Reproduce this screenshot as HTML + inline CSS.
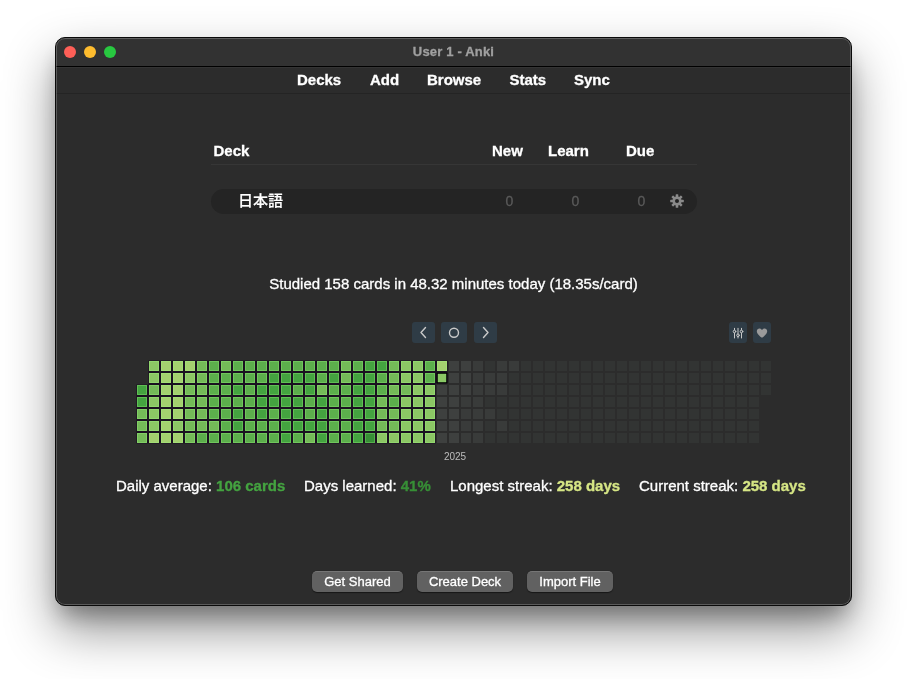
<!DOCTYPE html>
<html lang="en">
<head>
<meta charset="utf-8">
<title>User 1 - Anki</title>
<style>
html,body{margin:0;padding:0;}
body{width:907px;height:679px;background:#fff;position:relative;overflow:hidden;font-family:"Liberation Sans","Noto Sans CJK JP",sans-serif;color:#fff;}
#root{position:absolute;left:0;top:0;width:907px;height:679px;will-change:transform;-webkit-text-stroke:0.3px;}
#win{position:absolute;left:55px;top:37px;width:795px;height:567px;border:1px solid #0a0a0a;border-radius:10px;background:#2c2c2c;
 box-shadow:0 24px 50px rgba(0,0,0,.43), 0 14px 22px -6px rgba(0,0,0,.3);overflow:hidden;}
#win:after{content:"";position:absolute;left:0;top:0;right:0;bottom:0;border-radius:9px;box-shadow:inset 0 0 0 1px rgba(255,255,255,.22);pointer-events:none;}
#titlebar{position:absolute;left:0;top:0;width:795px;height:28px;background:#323232;border-bottom:1px solid #000;box-shadow:0 1px 0 #343434;}
.tl{position:absolute;top:8px;width:12px;height:12px;border-radius:50%;}
#title{position:absolute;left:0;right:0;top:6px;text-align:center;font-weight:bold;font-size:13px;line-height:16px;color:#a0a0a0;letter-spacing:0.18px;}
#toolbar{position:absolute;left:0;top:29px;width:795px;height:26px;border-bottom:1px solid #242424;}
#toolbar span{position:absolute;top:4px;font-weight:bold;font-size:15px;line-height:18px;color:#fff;}
.abs{position:absolute;white-space:nowrap;}
.hd{font-weight:bold;font-size:15px;line-height:18px;color:#fff;}
.btn{position:absolute;top:534px;height:20px;border-radius:5px;background:#616161;border-top:1px solid #767676;color:#fff;font-size:13px;line-height:20px;text-align:center;box-shadow:0 0.5px 1px rgba(0,0,0,.5);}
.hb{position:absolute;top:284px;height:21px;border-radius:3px;background:#2f3c46;}
svg{position:absolute;left:0;top:0;}
.k{fill:#1a1120;}
rect.l3{fill:#a4d06f;stroke:#a3de75;}rect.l4{fill:#8cc665;stroke:#92d76e;}rect.l5{fill:#74ba58;stroke:#81cf65;}rect.l6{fill:#5cae4c;stroke:#70c65c;}rect.l7{fill:#44a340;stroke:#60bf54;}rect.l8{fill:#378f36;stroke:#56b14d;}
rect.eA{fill:#3e403f;}rect.eB{fill:#393b3a;}rect.eC{fill:#323433;}
rect.t{stroke:#000;stroke-width:1.6;}
</style>
</head>
<body>
<div id="root">
<div id="win">
 <div id="titlebar">
  <div class="tl" style="left:8px;background:#fe5f57;"></div>
  <div class="tl" style="left:28px;background:#febc2e;"></div>
  <div class="tl" style="left:48px;background:#28c840;"></div>
  <div id="title">User 1 - Anki</div>
 </div>
 <div id="toolbar">
  <span style="left:241px">Decks</span>
  <span style="left:314px">Add</span>
  <span style="left:371px">Browse</span>
  <span style="left:453.4px">Stats</span>
  <span style="left:518px">Sync</span>
 </div>
</div>
<div class="abs hd" style="left:213.5px;top:142px;">Deck</div>
<div class="abs hd" style="left:492px;top:142px;">New</div>
<div class="abs hd" style="left:548px;top:142px;">Learn</div>
<div class="abs hd" style="left:626px;top:142px;">Due</div>
<div class="abs" style="left:211px;top:164px;width:486px;height:1px;background:#363636;"></div>
<div class="abs" style="left:211px;top:188.5px;width:486px;height:25px;border-radius:12.5px;background:#242424;"></div>
<div class="abs" style="left:238px;top:190.8px;font-size:15px;line-height:20px;color:#fff;font-weight:500;-webkit-text-stroke:0.2px;">日本語</div>
<div class="abs" style="left:505.5px;top:192px;font-size:14px;line-height:18px;color:#5a5a5a;">0</div>
<div class="abs" style="left:571.5px;top:192px;font-size:14px;line-height:18px;color:#5a5a5a;">0</div>
<div class="abs" style="left:637.5px;top:192px;font-size:14px;line-height:18px;color:#5a5a5a;">0</div>
<svg class="abs" style="left:670px;top:194px;" width="14" height="14" viewBox="0 0 14 14"><g fill="#8a8a8a"><circle cx="7" cy="7" r="4.6"/><g id="t"><rect x="5.7" y="0.2" width="2.6" height="13.6" rx="0.6"/></g><rect x="5.7" y="0.2" width="2.6" height="13.6" rx="0.6" transform="rotate(45 7 7)"/><rect x="5.7" y="0.2" width="2.6" height="13.6" rx="0.6" transform="rotate(90 7 7)"/><rect x="5.7" y="0.2" width="2.6" height="13.6" rx="0.6" transform="rotate(135 7 7)"/></g><circle cx="7" cy="7" r="2" fill="#222"/></svg>
<div class="abs" style="left:0;width:907px;top:275px;text-align:center;font-size:15px;line-height:18px;color:#fff;">Studied 158 cards in 48.32 minutes today (18.35s/card)</div>

<div class="hb" style="left:412px;top:322px;width:23px;"></div>
<div class="hb" style="left:441px;top:322px;width:26px;"></div>
<div class="hb" style="left:474px;top:322px;width:23px;"></div>
<div class="hb" style="left:729px;top:322px;width:18px;"></div>
<div class="hb" style="left:753px;top:322px;width:18px;"></div>
<svg width="907" height="679" viewBox="0 0 907 679">
<g fill="none" stroke="#c9c9c9" stroke-width="1.4" stroke-linecap="round" stroke-linejoin="round">
<path d="M425.5 327.5 L421 332.5 L425.5 337.5"/>
<circle cx="454" cy="332.8" r="4.5"/>
<path d="M483.5 327.5 L488 332.5 L483.5 337.5"/>
</g>
<g fill="none" stroke="#c9c9c9" stroke-width="1" stroke-linecap="round">
<path d="M734.5 328.3V338M738 328.3V338M741.5 328.3V338"/>
<circle cx="734.5" cy="331.5" r="1.3" fill="#2f3c46"/>
<circle cx="738" cy="335.3" r="1.3" fill="#2f3c46"/>
<circle cx="741.5" cy="331.5" r="1.3" fill="#2f3c46"/>
</g>
<path fill="#9a9a9a" transform="translate(762 333) scale(.94) translate(-762 -332.4)" d="M762 337.5 C757 334 756.5 331.5 756.5 330.2 C756.5 328.6 757.8 327.5 759.2 327.5 C760.4 327.5 761.4 328.2 762 329.2 C762.6 328.2 763.6 327.5 764.8 327.5 C766.2 327.5 767.5 328.6 767.5 330.2 C767.5 331.5 767 334 762 337.5Z"/>
<path class="k" d="M136.4 384.4 L148.4 384.4 L148.4 360.4 L447.6 360.4 L447.6 383.6 L435.6 383.6 L435.6 443.6 L136.4 443.6Z"/>
<rect class="l7" x="137.5" y="385.5" width="9" height="9"/>
<rect class="l7" x="137.5" y="397.5" width="9" height="9"/>
<rect class="l5" x="137.5" y="409.5" width="9" height="9"/>
<rect class="l5" x="137.5" y="421.5" width="9" height="9"/>
<rect class="l5" x="137.5" y="433.5" width="9" height="9"/>
<rect class="l4" x="149.5" y="361.5" width="9" height="9"/>
<rect class="l4" x="149.5" y="373.5" width="9" height="9"/>
<rect class="l5" x="149.5" y="385.5" width="9" height="9"/>
<rect class="l4" x="149.5" y="397.5" width="9" height="9"/>
<rect class="l4" x="149.5" y="409.5" width="9" height="9"/>
<rect class="l4" x="149.5" y="421.5" width="9" height="9"/>
<rect class="l3" x="149.5" y="433.5" width="9" height="9"/>
<rect class="l3" x="161.5" y="361.5" width="9" height="9"/>
<rect class="l3" x="161.5" y="373.5" width="9" height="9"/>
<rect class="l3" x="161.5" y="385.5" width="9" height="9"/>
<rect class="l3" x="161.5" y="397.5" width="9" height="9"/>
<rect class="l3" x="161.5" y="409.5" width="9" height="9"/>
<rect class="l3" x="161.5" y="421.5" width="9" height="9"/>
<rect class="l3" x="161.5" y="433.5" width="9" height="9"/>
<rect class="l3" x="173.5" y="361.5" width="9" height="9"/>
<rect class="l3" x="173.5" y="373.5" width="9" height="9"/>
<rect class="l3" x="173.5" y="385.5" width="9" height="9"/>
<rect class="l3" x="173.5" y="397.5" width="9" height="9"/>
<rect class="l3" x="173.5" y="409.5" width="9" height="9"/>
<rect class="l4" x="173.5" y="421.5" width="9" height="9"/>
<rect class="l3" x="173.5" y="433.5" width="9" height="9"/>
<rect class="l3" x="185.5" y="361.5" width="9" height="9"/>
<rect class="l4" x="185.5" y="373.5" width="9" height="9"/>
<rect class="l5" x="185.5" y="385.5" width="9" height="9"/>
<rect class="l5" x="185.5" y="397.5" width="9" height="9"/>
<rect class="l5" x="185.5" y="409.5" width="9" height="9"/>
<rect class="l5" x="185.5" y="421.5" width="9" height="9"/>
<rect class="l5" x="185.5" y="433.5" width="9" height="9"/>
<rect class="l5" x="197.5" y="361.5" width="9" height="9"/>
<rect class="l5" x="197.5" y="373.5" width="9" height="9"/>
<rect class="l5" x="197.5" y="385.5" width="9" height="9"/>
<rect class="l5" x="197.5" y="397.5" width="9" height="9"/>
<rect class="l5" x="197.5" y="409.5" width="9" height="9"/>
<rect class="l5" x="197.5" y="421.5" width="9" height="9"/>
<rect class="l6" x="197.5" y="433.5" width="9" height="9"/>
<rect class="l6" x="209.5" y="361.5" width="9" height="9"/>
<rect class="l6" x="209.5" y="373.5" width="9" height="9"/>
<rect class="l6" x="209.5" y="385.5" width="9" height="9"/>
<rect class="l6" x="209.5" y="397.5" width="9" height="9"/>
<rect class="l6" x="209.5" y="409.5" width="9" height="9"/>
<rect class="l5" x="209.5" y="421.5" width="9" height="9"/>
<rect class="l6" x="209.5" y="433.5" width="9" height="9"/>
<rect class="l5" x="221.5" y="361.5" width="9" height="9"/>
<rect class="l6" x="221.5" y="373.5" width="9" height="9"/>
<rect class="l6" x="221.5" y="385.5" width="9" height="9"/>
<rect class="l6" x="221.5" y="397.5" width="9" height="9"/>
<rect class="l6" x="221.5" y="409.5" width="9" height="9"/>
<rect class="l6" x="221.5" y="421.5" width="9" height="9"/>
<rect class="l6" x="221.5" y="433.5" width="9" height="9"/>
<rect class="l6" x="233.5" y="361.5" width="9" height="9"/>
<rect class="l6" x="233.5" y="373.5" width="9" height="9"/>
<rect class="l7" x="233.5" y="385.5" width="9" height="9"/>
<rect class="l6" x="233.5" y="397.5" width="9" height="9"/>
<rect class="l7" x="233.5" y="409.5" width="9" height="9"/>
<rect class="l7" x="233.5" y="421.5" width="9" height="9"/>
<rect class="l6" x="233.5" y="433.5" width="9" height="9"/>
<rect class="l6" x="245.5" y="361.5" width="9" height="9"/>
<rect class="l6" x="245.5" y="373.5" width="9" height="9"/>
<rect class="l6" x="245.5" y="385.5" width="9" height="9"/>
<rect class="l6" x="245.5" y="397.5" width="9" height="9"/>
<rect class="l6" x="245.5" y="409.5" width="9" height="9"/>
<rect class="l6" x="245.5" y="421.5" width="9" height="9"/>
<rect class="l6" x="245.5" y="433.5" width="9" height="9"/>
<rect class="l6" x="257.5" y="361.5" width="9" height="9"/>
<rect class="l6" x="257.5" y="373.5" width="9" height="9"/>
<rect class="l7" x="257.5" y="385.5" width="9" height="9"/>
<rect class="l7" x="257.5" y="397.5" width="9" height="9"/>
<rect class="l7" x="257.5" y="409.5" width="9" height="9"/>
<rect class="l6" x="257.5" y="421.5" width="9" height="9"/>
<rect class="l6" x="257.5" y="433.5" width="9" height="9"/>
<rect class="l6" x="269.5" y="361.5" width="9" height="9"/>
<rect class="l7" x="269.5" y="373.5" width="9" height="9"/>
<rect class="l7" x="269.5" y="385.5" width="9" height="9"/>
<rect class="l7" x="269.5" y="397.5" width="9" height="9"/>
<rect class="l6" x="269.5" y="409.5" width="9" height="9"/>
<rect class="l6" x="269.5" y="421.5" width="9" height="9"/>
<rect class="l6" x="269.5" y="433.5" width="9" height="9"/>
<rect class="l6" x="281.5" y="361.5" width="9" height="9"/>
<rect class="l7" x="281.5" y="373.5" width="9" height="9"/>
<rect class="l7" x="281.5" y="385.5" width="9" height="9"/>
<rect class="l7" x="281.5" y="397.5" width="9" height="9"/>
<rect class="l7" x="281.5" y="409.5" width="9" height="9"/>
<rect class="l7" x="281.5" y="421.5" width="9" height="9"/>
<rect class="l7" x="281.5" y="433.5" width="9" height="9"/>
<rect class="l6" x="293.5" y="361.5" width="9" height="9"/>
<rect class="l7" x="293.5" y="373.5" width="9" height="9"/>
<rect class="l6" x="293.5" y="385.5" width="9" height="9"/>
<rect class="l7" x="293.5" y="397.5" width="9" height="9"/>
<rect class="l7" x="293.5" y="409.5" width="9" height="9"/>
<rect class="l7" x="293.5" y="421.5" width="9" height="9"/>
<rect class="l6" x="293.5" y="433.5" width="9" height="9"/>
<rect class="l6" x="305.5" y="361.5" width="9" height="9"/>
<rect class="l7" x="305.5" y="373.5" width="9" height="9"/>
<rect class="l7" x="305.5" y="385.5" width="9" height="9"/>
<rect class="l6" x="305.5" y="397.5" width="9" height="9"/>
<rect class="l6" x="305.5" y="409.5" width="9" height="9"/>
<rect class="l7" x="305.5" y="421.5" width="9" height="9"/>
<rect class="l5" x="305.5" y="433.5" width="9" height="9"/>
<rect class="l6" x="317.5" y="361.5" width="9" height="9"/>
<rect class="l6" x="317.5" y="373.5" width="9" height="9"/>
<rect class="l5" x="317.5" y="385.5" width="9" height="9"/>
<rect class="l7" x="317.5" y="397.5" width="9" height="9"/>
<rect class="l7" x="317.5" y="409.5" width="9" height="9"/>
<rect class="l7" x="317.5" y="421.5" width="9" height="9"/>
<rect class="l7" x="317.5" y="433.5" width="9" height="9"/>
<rect class="l6" x="329.5" y="361.5" width="9" height="9"/>
<rect class="l7" x="329.5" y="373.5" width="9" height="9"/>
<rect class="l6" x="329.5" y="385.5" width="9" height="9"/>
<rect class="l6" x="329.5" y="397.5" width="9" height="9"/>
<rect class="l6" x="329.5" y="409.5" width="9" height="9"/>
<rect class="l6" x="329.5" y="421.5" width="9" height="9"/>
<rect class="l6" x="329.5" y="433.5" width="9" height="9"/>
<rect class="l5" x="341.5" y="361.5" width="9" height="9"/>
<rect class="l5" x="341.5" y="373.5" width="9" height="9"/>
<rect class="l6" x="341.5" y="385.5" width="9" height="9"/>
<rect class="l6" x="341.5" y="397.5" width="9" height="9"/>
<rect class="l6" x="341.5" y="409.5" width="9" height="9"/>
<rect class="l6" x="341.5" y="421.5" width="9" height="9"/>
<rect class="l6" x="341.5" y="433.5" width="9" height="9"/>
<rect class="l6" x="353.5" y="361.5" width="9" height="9"/>
<rect class="l7" x="353.5" y="373.5" width="9" height="9"/>
<rect class="l7" x="353.5" y="385.5" width="9" height="9"/>
<rect class="l7" x="353.5" y="397.5" width="9" height="9"/>
<rect class="l7" x="353.5" y="409.5" width="9" height="9"/>
<rect class="l7" x="353.5" y="421.5" width="9" height="9"/>
<rect class="l7" x="353.5" y="433.5" width="9" height="9"/>
<rect class="l7" x="365.5" y="361.5" width="9" height="9"/>
<rect class="l7" x="365.5" y="373.5" width="9" height="9"/>
<rect class="l7" x="365.5" y="385.5" width="9" height="9"/>
<rect class="l7" x="365.5" y="397.5" width="9" height="9"/>
<rect class="l7" x="365.5" y="409.5" width="9" height="9"/>
<rect class="l7" x="365.5" y="421.5" width="9" height="9"/>
<rect class="l8" x="365.5" y="433.5" width="9" height="9"/>
<rect class="l7" x="377.5" y="361.5" width="9" height="9"/>
<rect class="l6" x="377.5" y="373.5" width="9" height="9"/>
<rect class="l6" x="377.5" y="385.5" width="9" height="9"/>
<rect class="l5" x="377.5" y="397.5" width="9" height="9"/>
<rect class="l5" x="377.5" y="409.5" width="9" height="9"/>
<rect class="l5" x="377.5" y="421.5" width="9" height="9"/>
<rect class="l4" x="377.5" y="433.5" width="9" height="9"/>
<rect class="l5" x="389.5" y="361.5" width="9" height="9"/>
<rect class="l5" x="389.5" y="373.5" width="9" height="9"/>
<rect class="l5" x="389.5" y="385.5" width="9" height="9"/>
<rect class="l6" x="389.5" y="397.5" width="9" height="9"/>
<rect class="l5" x="389.5" y="409.5" width="9" height="9"/>
<rect class="l5" x="389.5" y="421.5" width="9" height="9"/>
<rect class="l4" x="389.5" y="433.5" width="9" height="9"/>
<rect class="l4" x="401.5" y="361.5" width="9" height="9"/>
<rect class="l4" x="401.5" y="373.5" width="9" height="9"/>
<rect class="l5" x="401.5" y="385.5" width="9" height="9"/>
<rect class="l4" x="401.5" y="397.5" width="9" height="9"/>
<rect class="l4" x="401.5" y="409.5" width="9" height="9"/>
<rect class="l4" x="401.5" y="421.5" width="9" height="9"/>
<rect class="l4" x="401.5" y="433.5" width="9" height="9"/>
<rect class="l4" x="413.5" y="361.5" width="9" height="9"/>
<rect class="l4" x="413.5" y="373.5" width="9" height="9"/>
<rect class="l4" x="413.5" y="385.5" width="9" height="9"/>
<rect class="l4" x="413.5" y="397.5" width="9" height="9"/>
<rect class="l4" x="413.5" y="409.5" width="9" height="9"/>
<rect class="l4" x="413.5" y="421.5" width="9" height="9"/>
<rect class="l4" x="413.5" y="433.5" width="9" height="9"/>
<rect class="l6" x="425.5" y="361.5" width="9" height="9"/>
<rect class="l6" x="425.5" y="373.5" width="9" height="9"/>
<rect class="l4" x="425.5" y="385.5" width="9" height="9"/>
<rect class="l4" x="425.5" y="397.5" width="9" height="9"/>
<rect class="l4" x="425.5" y="409.5" width="9" height="9"/>
<rect class="l4" x="425.5" y="421.5" width="9" height="9"/>
<rect class="l4" x="425.5" y="433.5" width="9" height="9"/>
<rect class="l3" x="437.5" y="361.5" width="9" height="9"/>
<rect x="436.7" y="372.7" width="10.6" height="10.6" fill="#000"/><rect class="l4" x="438.3" y="374.3" width="7.4" height="7.4"/>
<rect class="eA" x="437" y="385" width="10" height="10"/>
<rect class="eA" x="437" y="397" width="10" height="10"/>
<rect class="eA" x="437" y="409" width="10" height="10"/>
<rect class="eA" x="437" y="421" width="10" height="10"/>
<rect class="eA" x="437" y="433" width="10" height="10"/>
<rect class="eA" x="449" y="361" width="10" height="10"/>
<rect class="eA" x="449" y="373" width="10" height="10"/>
<rect class="eA" x="449" y="385" width="10" height="10"/>
<rect class="eA" x="449" y="397" width="10" height="10"/>
<rect class="eA" x="449" y="409" width="10" height="10"/>
<rect class="eA" x="449" y="421" width="10" height="10"/>
<rect class="eA" x="449" y="433" width="10" height="10"/>
<rect class="eA" x="461" y="361" width="10" height="10"/>
<rect class="eA" x="461" y="373" width="10" height="10"/>
<rect class="eA" x="461" y="385" width="10" height="10"/>
<rect class="eB" x="461" y="397" width="10" height="10"/>
<rect class="eB" x="461" y="409" width="10" height="10"/>
<rect class="eB" x="461" y="421" width="10" height="10"/>
<rect class="eB" x="461" y="433" width="10" height="10"/>
<rect class="eB" x="473" y="361" width="10" height="10"/>
<rect class="eB" x="473" y="373" width="10" height="10"/>
<rect class="eB" x="473" y="385" width="10" height="10"/>
<rect class="eB" x="473" y="397" width="10" height="10"/>
<rect class="eB" x="473" y="409" width="10" height="10"/>
<rect class="eB" x="473" y="421" width="10" height="10"/>
<rect class="eB" x="473" y="433" width="10" height="10"/>
<rect class="eC" x="485" y="361" width="10" height="10"/>
<rect class="eB" x="485" y="373" width="10" height="10"/>
<rect class="eB" x="485" y="385" width="10" height="10"/>
<rect class="eC" x="485" y="397" width="10" height="10"/>
<rect class="eB" x="485" y="409" width="10" height="10"/>
<rect class="eC" x="485" y="421" width="10" height="10"/>
<rect class="eC" x="485" y="433" width="10" height="10"/>
<rect class="eB" x="497" y="361" width="10" height="10"/>
<rect class="eB" x="497" y="373" width="10" height="10"/>
<rect class="eB" x="497" y="385" width="10" height="10"/>
<rect class="eC" x="497" y="397" width="10" height="10"/>
<rect class="eC" x="497" y="409" width="10" height="10"/>
<rect class="eB" x="497" y="421" width="10" height="10"/>
<rect class="eC" x="497" y="433" width="10" height="10"/>
<rect class="eB" x="509" y="361" width="10" height="10"/>
<rect class="eC" x="509" y="373" width="10" height="10"/>
<rect class="eC" x="509" y="385" width="10" height="10"/>
<rect class="eC" x="509" y="397" width="10" height="10"/>
<rect class="eC" x="509" y="409" width="10" height="10"/>
<rect class="eC" x="509" y="421" width="10" height="10"/>
<rect class="eC" x="509" y="433" width="10" height="10"/>
<rect class="eC" x="521" y="361" width="10" height="10"/>
<rect class="eC" x="521" y="373" width="10" height="10"/>
<rect class="eC" x="521" y="385" width="10" height="10"/>
<rect class="eC" x="521" y="397" width="10" height="10"/>
<rect class="eC" x="521" y="409" width="10" height="10"/>
<rect class="eC" x="521" y="421" width="10" height="10"/>
<rect class="eC" x="521" y="433" width="10" height="10"/>
<rect class="eC" x="533" y="361" width="10" height="10"/>
<rect class="eC" x="533" y="373" width="10" height="10"/>
<rect class="eC" x="533" y="385" width="10" height="10"/>
<rect class="eC" x="533" y="397" width="10" height="10"/>
<rect class="eC" x="533" y="409" width="10" height="10"/>
<rect class="eC" x="533" y="421" width="10" height="10"/>
<rect class="eC" x="533" y="433" width="10" height="10"/>
<rect class="eC" x="545" y="361" width="10" height="10"/>
<rect class="eC" x="545" y="373" width="10" height="10"/>
<rect class="eC" x="545" y="385" width="10" height="10"/>
<rect class="eC" x="545" y="397" width="10" height="10"/>
<rect class="eC" x="545" y="409" width="10" height="10"/>
<rect class="eC" x="545" y="421" width="10" height="10"/>
<rect class="eC" x="545" y="433" width="10" height="10"/>
<rect class="eC" x="557" y="361" width="10" height="10"/>
<rect class="eC" x="557" y="373" width="10" height="10"/>
<rect class="eC" x="557" y="385" width="10" height="10"/>
<rect class="eC" x="557" y="397" width="10" height="10"/>
<rect class="eC" x="557" y="409" width="10" height="10"/>
<rect class="eC" x="557" y="421" width="10" height="10"/>
<rect class="eC" x="557" y="433" width="10" height="10"/>
<rect class="eC" x="569" y="361" width="10" height="10"/>
<rect class="eC" x="569" y="373" width="10" height="10"/>
<rect class="eC" x="569" y="385" width="10" height="10"/>
<rect class="eC" x="569" y="397" width="10" height="10"/>
<rect class="eC" x="569" y="409" width="10" height="10"/>
<rect class="eC" x="569" y="421" width="10" height="10"/>
<rect class="eC" x="569" y="433" width="10" height="10"/>
<rect class="eC" x="581" y="361" width="10" height="10"/>
<rect class="eC" x="581" y="373" width="10" height="10"/>
<rect class="eC" x="581" y="385" width="10" height="10"/>
<rect class="eC" x="581" y="397" width="10" height="10"/>
<rect class="eC" x="581" y="409" width="10" height="10"/>
<rect class="eC" x="581" y="421" width="10" height="10"/>
<rect class="eC" x="581" y="433" width="10" height="10"/>
<rect class="eC" x="593" y="361" width="10" height="10"/>
<rect class="eC" x="593" y="373" width="10" height="10"/>
<rect class="eC" x="593" y="385" width="10" height="10"/>
<rect class="eC" x="593" y="397" width="10" height="10"/>
<rect class="eC" x="593" y="409" width="10" height="10"/>
<rect class="eC" x="593" y="421" width="10" height="10"/>
<rect class="eC" x="593" y="433" width="10" height="10"/>
<rect class="eC" x="605" y="361" width="10" height="10"/>
<rect class="eC" x="605" y="373" width="10" height="10"/>
<rect class="eC" x="605" y="385" width="10" height="10"/>
<rect class="eC" x="605" y="397" width="10" height="10"/>
<rect class="eC" x="605" y="409" width="10" height="10"/>
<rect class="eC" x="605" y="421" width="10" height="10"/>
<rect class="eC" x="605" y="433" width="10" height="10"/>
<rect class="eC" x="617" y="361" width="10" height="10"/>
<rect class="eC" x="617" y="373" width="10" height="10"/>
<rect class="eC" x="617" y="385" width="10" height="10"/>
<rect class="eC" x="617" y="397" width="10" height="10"/>
<rect class="eC" x="617" y="409" width="10" height="10"/>
<rect class="eC" x="617" y="421" width="10" height="10"/>
<rect class="eC" x="617" y="433" width="10" height="10"/>
<rect class="eC" x="629" y="361" width="10" height="10"/>
<rect class="eC" x="629" y="373" width="10" height="10"/>
<rect class="eC" x="629" y="385" width="10" height="10"/>
<rect class="eC" x="629" y="397" width="10" height="10"/>
<rect class="eC" x="629" y="409" width="10" height="10"/>
<rect class="eC" x="629" y="421" width="10" height="10"/>
<rect class="eC" x="629" y="433" width="10" height="10"/>
<rect class="eC" x="641" y="361" width="10" height="10"/>
<rect class="eC" x="641" y="373" width="10" height="10"/>
<rect class="eC" x="641" y="385" width="10" height="10"/>
<rect class="eC" x="641" y="397" width="10" height="10"/>
<rect class="eC" x="641" y="409" width="10" height="10"/>
<rect class="eC" x="641" y="421" width="10" height="10"/>
<rect class="eC" x="641" y="433" width="10" height="10"/>
<rect class="eC" x="653" y="361" width="10" height="10"/>
<rect class="eC" x="653" y="373" width="10" height="10"/>
<rect class="eC" x="653" y="385" width="10" height="10"/>
<rect class="eC" x="653" y="397" width="10" height="10"/>
<rect class="eC" x="653" y="409" width="10" height="10"/>
<rect class="eC" x="653" y="421" width="10" height="10"/>
<rect class="eC" x="653" y="433" width="10" height="10"/>
<rect class="eC" x="665" y="361" width="10" height="10"/>
<rect class="eC" x="665" y="373" width="10" height="10"/>
<rect class="eC" x="665" y="385" width="10" height="10"/>
<rect class="eC" x="665" y="397" width="10" height="10"/>
<rect class="eC" x="665" y="409" width="10" height="10"/>
<rect class="eC" x="665" y="421" width="10" height="10"/>
<rect class="eC" x="665" y="433" width="10" height="10"/>
<rect class="eC" x="677" y="361" width="10" height="10"/>
<rect class="eC" x="677" y="373" width="10" height="10"/>
<rect class="eC" x="677" y="385" width="10" height="10"/>
<rect class="eC" x="677" y="397" width="10" height="10"/>
<rect class="eC" x="677" y="409" width="10" height="10"/>
<rect class="eC" x="677" y="421" width="10" height="10"/>
<rect class="eC" x="677" y="433" width="10" height="10"/>
<rect class="eC" x="689" y="361" width="10" height="10"/>
<rect class="eC" x="689" y="373" width="10" height="10"/>
<rect class="eC" x="689" y="385" width="10" height="10"/>
<rect class="eC" x="689" y="397" width="10" height="10"/>
<rect class="eC" x="689" y="409" width="10" height="10"/>
<rect class="eC" x="689" y="421" width="10" height="10"/>
<rect class="eC" x="689" y="433" width="10" height="10"/>
<rect class="eC" x="701" y="361" width="10" height="10"/>
<rect class="eC" x="701" y="373" width="10" height="10"/>
<rect class="eC" x="701" y="385" width="10" height="10"/>
<rect class="eC" x="701" y="397" width="10" height="10"/>
<rect class="eC" x="701" y="409" width="10" height="10"/>
<rect class="eC" x="701" y="421" width="10" height="10"/>
<rect class="eC" x="701" y="433" width="10" height="10"/>
<rect class="eC" x="713" y="361" width="10" height="10"/>
<rect class="eC" x="713" y="373" width="10" height="10"/>
<rect class="eC" x="713" y="385" width="10" height="10"/>
<rect class="eC" x="713" y="397" width="10" height="10"/>
<rect class="eC" x="713" y="409" width="10" height="10"/>
<rect class="eC" x="713" y="421" width="10" height="10"/>
<rect class="eC" x="713" y="433" width="10" height="10"/>
<rect class="eC" x="725" y="361" width="10" height="10"/>
<rect class="eC" x="725" y="373" width="10" height="10"/>
<rect class="eC" x="725" y="385" width="10" height="10"/>
<rect class="eC" x="725" y="397" width="10" height="10"/>
<rect class="eC" x="725" y="409" width="10" height="10"/>
<rect class="eC" x="725" y="421" width="10" height="10"/>
<rect class="eC" x="725" y="433" width="10" height="10"/>
<rect class="eC" x="737" y="361" width="10" height="10"/>
<rect class="eC" x="737" y="373" width="10" height="10"/>
<rect class="eC" x="737" y="385" width="10" height="10"/>
<rect class="eC" x="737" y="397" width="10" height="10"/>
<rect class="eC" x="737" y="409" width="10" height="10"/>
<rect class="eC" x="737" y="421" width="10" height="10"/>
<rect class="eC" x="737" y="433" width="10" height="10"/>
<rect class="eC" x="749" y="361" width="10" height="10"/>
<rect class="eC" x="749" y="373" width="10" height="10"/>
<rect class="eC" x="749" y="385" width="10" height="10"/>
<rect class="eC" x="749" y="397" width="10" height="10"/>
<rect class="eC" x="749" y="409" width="10" height="10"/>
<rect class="eC" x="749" y="421" width="10" height="10"/>
<rect class="eC" x="749" y="433" width="10" height="10"/>
<rect class="eC" x="761" y="361" width="10" height="10"/>
<rect class="eC" x="761" y="373" width="10" height="10"/>
<rect class="eC" x="761" y="385" width="10" height="10"/>
<text x="455" y="460" text-anchor="middle" font-size="10" fill="#bdbdbd" font-family="Liberation Sans, sans-serif">2025</text>
</svg>
<div class="abs" style="left:116px;top:477px;font-size:15px;line-height:18px;color:#fff;">Daily average: <b style="color:#44a340">106 cards</b></div>
<div class="abs" style="left:304px;top:477px;font-size:15px;line-height:18px;color:#fff;">Days learned: <b style="color:#378f36">41%</b></div>
<div class="abs" style="left:450px;top:477px;font-size:15px;line-height:18px;color:#fff;">Longest streak: <b style="color:#d6e685">258 days</b></div>
<div class="abs" style="left:639px;top:477px;font-size:15px;line-height:18px;color:#fff;">Current streak: <b style="color:#d6e685">258 days</b></div>

<div class="btn" style="left:312px;top:571px;width:91px;">Get Shared</div>
<div class="btn" style="left:417px;top:571px;width:96px;">Create Deck</div>
<div class="btn" style="left:527px;top:571px;width:86px;">Import File</div>
</div>
</body>
</html>
